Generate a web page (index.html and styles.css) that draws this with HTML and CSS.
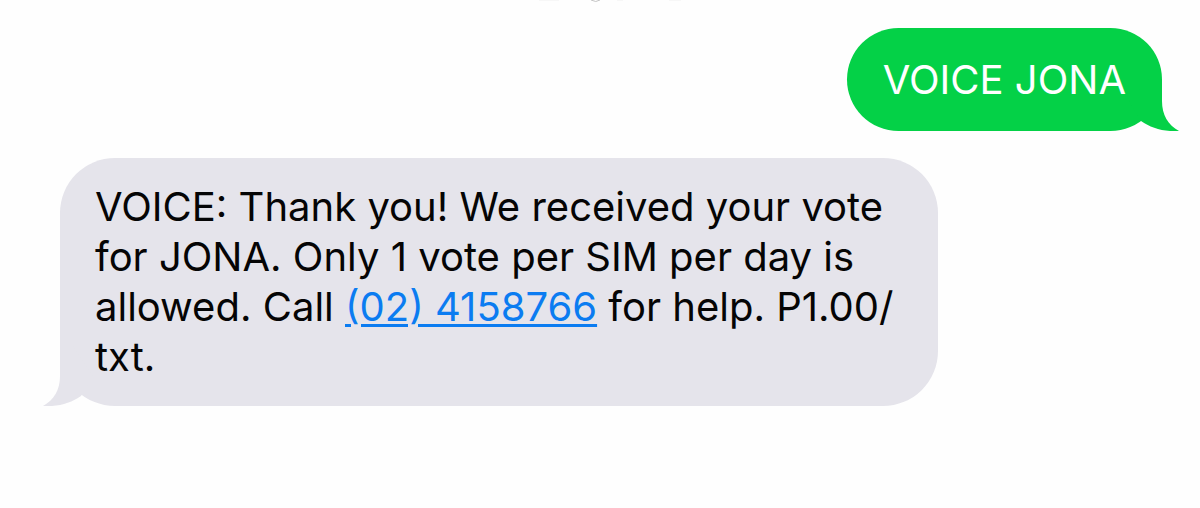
FILE: index.html
```html
<!DOCTYPE html>
<html lang="en">
<head>
<meta charset="utf-8">
<meta name="viewport" content="width=device-width, initial-scale=1">
<title>Messages</title>
<link rel="stylesheet" href="styles.css">
</head>
<body>
<main class="thread">
  <svg class="header-edge" viewBox="0 0 160 4" aria-hidden="true">
    <path d="M60 0Q65 3 69 0" fill="none" stroke="#c4c4c4"/>
    <path d="M8 0H28M86 0H92M138 0H150" stroke="#f0f0f0"/>
  </svg>
  <div class="bubble sent">
    <p class="text">VOICE JONA</p>
    <svg class="tail" viewBox="0 0 50 60" aria-hidden="true"><path d="M33 8V30C33 44 39 54 50 60C35 61 22 57 12 50L0 30L20 8Z"/></svg>
  </div>
  <div class="bubble received">
    <p class="text">VOICE: Thank you! We received your vote for JONA. Only 1 vote per SIM per day is allowed. Call <a class="phone" href="tel:024158766">(02) 4158766</a> for help. P1.00/<wbr>txt.</p>
    <svg class="tail" viewBox="0 0 50 60" aria-hidden="true"><path d="M33 0V30C33 44 39 54 50 60C35 61 22 57 12 50L0 30L20 0Z"/></svg>
  </div>
</main>
</body>
</html>
```
FILE: styles.css
```css
body {
  margin: 0;
  background: #fefefe;
  font-family: Inter, "Liberation Sans", sans-serif;
  font-size: 40px;
  line-height: 50px;
  color: #050505;
}

.thread {
  display: flex;
  flex-direction: column;
  padding: 0 38px 40px 60px;
}

.header-edge {
  width: 160px;
  height: 4px;
  margin-bottom: 24px;
  align-self: center;
}

.bubble {
  position: relative;
  box-sizing: border-box;
}

.text {
  margin: 0;
}

.sent {
  align-self: flex-end;
  margin-bottom: 27px;
  padding: 27px 36px 26px;
  border-radius: 52px;
  background: #04d147;
  color: #fff;
}

.received {
  align-self: flex-start;
  max-width: 878px;
  padding: 24px 35px;
  border-radius: 55px;
  background: #e5e4eb;
}

.phone {
  color: #0b7cf1;
  text-decoration-thickness: 3px;
  text-underline-offset: 3px;
}

.tail {
  position: absolute;
  bottom: 0;
  width: 50px;
  height: 60px;
}

.sent .tail {
  right: -17px;
  fill: #04d147;
}

.received .tail {
  left: -17px;
  fill: #e5e4eb;
  transform: scaleX(-1);
}
```
